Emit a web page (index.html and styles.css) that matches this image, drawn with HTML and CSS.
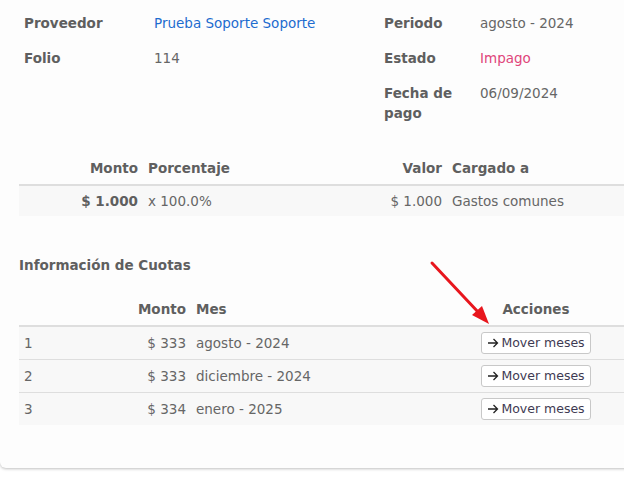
FILE: index.html
```html
<!DOCTYPE html>
<html lang="es">
<head>
    <meta charset="UTF-8">
    <meta name="viewport" content="width=device-width, initial-scale=1.0">
    <title>Detalle de gasto</title>
    <link rel="stylesheet" href="styles.css">
</head>
<body>
    <div class="card">
        <div class="info">
            <div class="label">Proveedor</div>
            <div class="value link">Prueba Soporte Soporte</div>
            <div class="label">Periodo</div>
            <div class="value">agosto - 2024</div>

            <div class="label">Folio</div>
            <div class="value">114</div>
            <div class="label">Estado</div>
            <div class="value unpaid">Impago</div>

            <div class="label"></div>
            <div class="value"></div>
            <div class="label">Fecha de pago</div>
            <div class="value">06/09/2024</div>
        </div>

        <table class="charges">
            <thead>
                <tr>
                    <th class="num c-monto">Monto</th>
                    <th class="c-pct">Porcentaje</th>
                    <th class="num c-valor">Valor</th>
                    <th>Cargado a</th>
                </tr>
            </thead>
            <tbody>
                <tr>
                    <td class="num strong">$ 1.000</td>
                    <td>x 100.0%</td>
                    <td class="num">$ 1.000</td>
                    <td>Gastos comunes</td>
                </tr>
            </tbody>
        </table>

        <h3 class="section-title">Información de Cuotas</h3>

        <table class="quotas">
            <thead>
                <tr>
                    <th class="c-idx"></th>
                    <th class="num c-amount">Monto</th>
                    <th class="c-month">Mes</th>
                    <th class="center">Acciones</th>
                </tr>
            </thead>
            <tbody>
                <tr>
                    <td>1</td>
                    <td class="num">$ 333</td>
                    <td>agosto - 2024</td>
                    <td class="center"><button class="btn-move"><svg width="12" height="10" viewBox="0 0 12 10"><path d="M1 5h9.5M6.5 1l4 4-4 4" fill="none" stroke="#222" stroke-width="1.3"/></svg>Mover meses</button></td>
                </tr>
                <tr>
                    <td>2</td>
                    <td class="num">$ 333</td>
                    <td>diciembre - 2024</td>
                    <td class="center"><button class="btn-move"><svg width="12" height="10" viewBox="0 0 12 10"><path d="M1 5h9.5M6.5 1l4 4-4 4" fill="none" stroke="#222" stroke-width="1.3"/></svg>Mover meses</button></td>
                </tr>
                <tr>
                    <td>3</td>
                    <td class="num">$ 334</td>
                    <td>enero - 2025</td>
                    <td class="center"><button class="btn-move"><svg width="12" height="10" viewBox="0 0 12 10"><path d="M1 5h9.5M6.5 1l4 4-4 4" fill="none" stroke="#222" stroke-width="1.3"/></svg>Mover meses</button></td>
                </tr>
            </tbody>
        </table>
    </div>

    <!-- flecha de anotacion -->
    <svg class="annotation" width="80" height="80" viewBox="0 0 80 80">
        <line x1="3" y1="3" x2="50" y2="53" stroke="#e8161d" stroke-width="3" stroke-linecap="round"/>
        <polygon points="60,64 43,55 53,46" fill="#e8161d"/>
    </svg>
</body>
</html>
```

FILE: styles.css
```css
html, body {
    margin: 0;
    padding: 0;
    background: #fff;
    overflow: hidden;
}

body {
    font-family: "DejaVu Sans", sans-serif;
    font-size: 13.5px;
    color: #666;
    position: relative;
    height: 480px;
}

.card {
    width: 643px;
    box-sizing: border-box;
    padding: 13px 19px 43px;
    background: #fdfdfd;
    border-radius: 0 0 6px 6px;
    box-shadow: 0 1px 3px rgba(0, 0, 0, 0.25);
}

.info {
    display: grid;
    grid-template-columns: 130px 230px 96px auto;
    row-gap: 15px;
    padding-left: 5px;
    line-height: 20px;
}

.label {
    font-weight: bold;
    color: #5f5f5f;
    padding-right: 12px;
}

.link {
    color: #1d6ccf;
}

.unpaid {
    color: #e0457b;
}

table {
    width: 100%;
    border-collapse: collapse;
    table-layout: fixed;
    line-height: 20px;
}

th {
    text-align: left;
    font-weight: bold;
    color: #5f5f5f;
    padding: 6px 5px;
    border-bottom: 2px solid #dedede;
}

td {
    padding: 5px 5px;
    background: #f8f8f8;
}

.num {
    text-align: right;
}

.center {
    text-align: center;
}

.strong {
    font-weight: bold;
    color: #5f5f5f;
}

.charges {
    margin-top: 29px;
}

.c-monto { width: 114px; }
.c-pct { width: 165px; }
.c-valor { width: 119px; }

.section-title {
    margin: 39px 0 18px;
    font-size: 13.5px;
    line-height: 20px;
    color: #5f5f5f;
}

.quotas td {
    padding: 5px 5px;
    border-bottom: 1px solid #dedede;
}

.quotas tr:last-child td {
    border-bottom: none;
}

.c-idx { width: 62px; }
.c-amount { width: 90px; }
.c-month { width: 247px; }

.btn-move {
    font-family: inherit;
    font-size: 12.5px;
    color: #3e3a52;
    background: #fff;
    border: 1px solid #c8c8c8;
    border-radius: 3px;
    padding: 1px 5px;
    line-height: 18px;
    display: inline-flex;
    align-items: center;
    gap: 2px;
    cursor: pointer;
}

.annotation {
    position: absolute;
    left: 429px;
    top: 260px;
}
```
